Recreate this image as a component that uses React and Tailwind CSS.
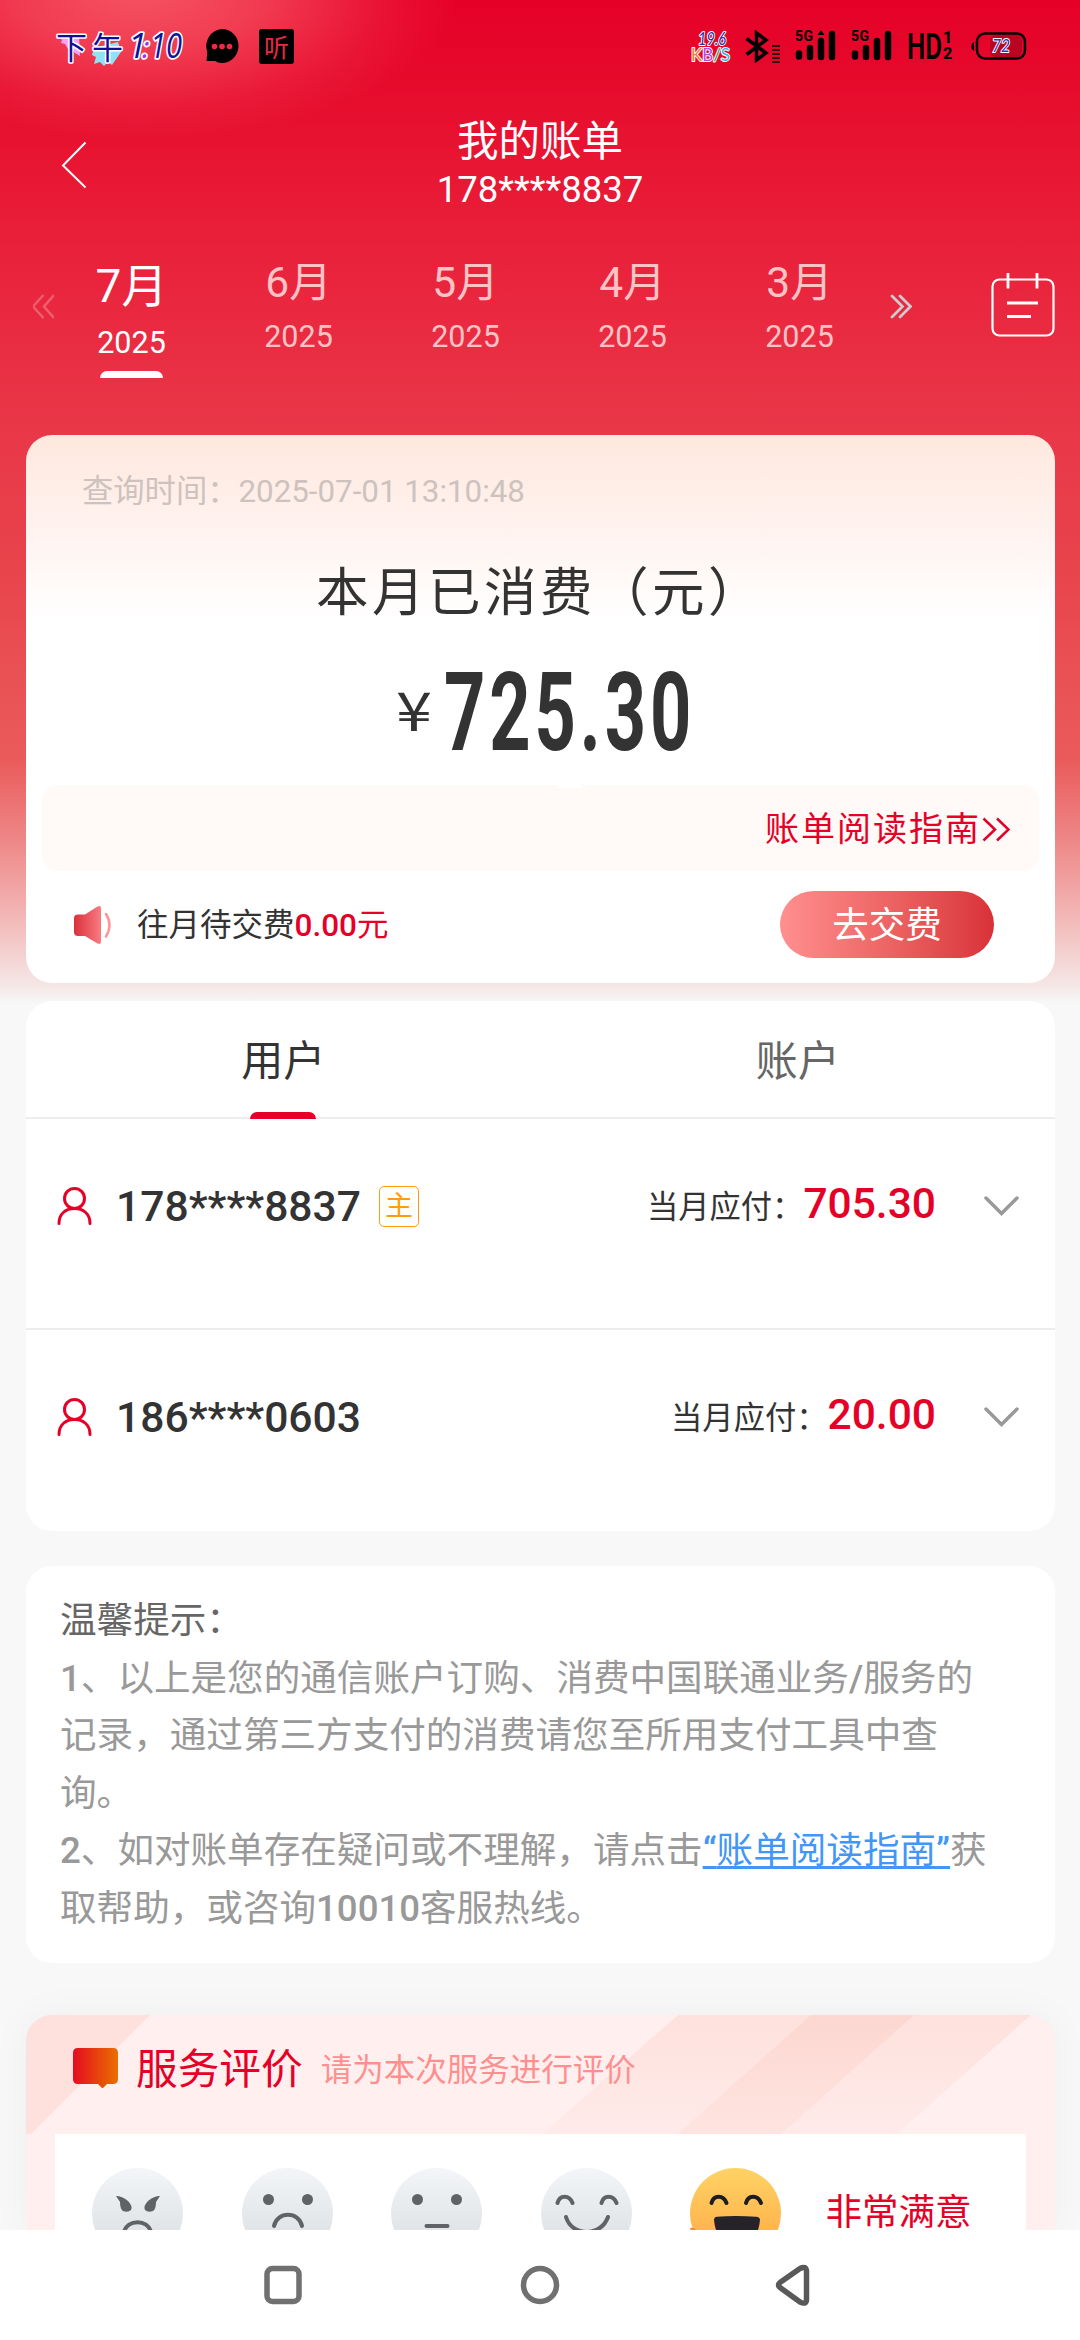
import { useState } from "react";

const months = [
  { month: "7月", year: "2025" },
  { month: "6月", year: "2025" },
  { month: "5月", year: "2025" },
  { month: "4月", year: "2025" },
  { month: "3月", year: "2025" },
];

const users = [
  { phone: "178****8837", amount: "705.30", main: true },
  { phone: "186****0603", amount: "20.00", main: false },
];

function Signal({ arrow }) {
  return (
    <svg className="overflow-visible" width="41" height="32" viewBox="0 0 41 32" fill="none">
      <text x="0" y="11" fontSize="14" fontWeight="700" fontFamily="Roboto" textLength="18" fill="#000">5G</text>
      <path d="M4 23.500v3M15 18v9M26 11v16M37 4v23" stroke="#000" strokeWidth="6.500" strokeLinecap="round" />
      {arrow && <path d="M26 0l3.500 5h-7z" fill="#000" />}
    </svg>
  );
}

function StatusBar() {
  return (
    <div className="flex h-[92px] items-center">
      <svg className="ml-[56px] overflow-visible" width="127" height="44" viewBox="0 0 127 44">
        <path d="M3 12l20-2 1 22-5-3-3-3-4-1-3-5-4-1 1-3z" fill="#f9a0f5" />
        <path d="M38 24l24-6 3 10-9 13-4-3-4 4-4-4-6 2 2-7-4-2z" fill="#8fe3f5" />
        <g fontFamily="'Noto Sans CJK SC', sans-serif" fill="#140c9c" stroke="#fff" strokeWidth="3" strokeLinejoin="round" paintOrder="stroke">
          <text x="0" y="35" fontSize="31">下</text>
          <text x="36" y="35" fontSize="31">午</text>
        </g>
        <g fontFamily="'Open Sans', sans-serif" fontStyle="italic" fill="#0d149b" stroke="#fff" strokeWidth="3.500" strokeLinejoin="round" paintOrder="stroke">
          <text x="72" y="34" fontSize="34">1</text>
          <text x="86" y="34" fontSize="30" fill="#9a30ff">:</text>
          <text x="94" y="34" fontSize="34" textLength="32" lengthAdjust="spacingAndGlyphs">10</text>
        </g>
      </svg>
      <svg className="ml-[22px]" width="34" height="36" viewBox="0 0 34 36">
        <path d="M17 1a16.500 17 0 1 1 0 34c-3 0-5-1-7-2H1.500l.8-9A16.500 17 0 0 1 17 1z" fill="#000" />
        <g fill="#ee2b45">
          <circle cx="9.500" cy="18.500" r="2.800" />
          <circle cx="17" cy="18.500" r="2.800" />
          <circle cx="24.500" cy="18.500" r="2.800" />
        </g>
      </svg>
      <div className="ml-[20px] flex size-[35px] items-center justify-center rounded-[3px] bg-black font-['Noto_Sans_CJK_SC',sans-serif] text-[25px] leading-[35px] text-[#e62a45]">听</div>

      <svg className="ml-[396px] overflow-visible" width="42" height="34" viewBox="0 0 42 34">
        <g fontFamily="Lato, sans-serif" stroke="#fff" strokeWidth="2" strokeLinejoin="round" paintOrder="stroke">
          <text x="8" y="16" fontSize="17" fontStyle="italic" fill="#2330a8" textLength="28" lengthAdjust="spacingAndGlyphs">19.6</text>
          <text x="1" y="32" fontSize="18" textLength="39" lengthAdjust="spacingAndGlyphs">
            <tspan fill="#f0803c">K</tspan>
            <tspan fill="#b04bea">B</tspan>
            <tspan fill="#1f9c4c">/</tspan>
            <tspan fill="#35b6e6">S</tspan>
          </text>
        </g>
      </svg>
      <svg className="ml-[13px]" width="35" height="33" viewBox="0 0 35 33" fill="none" stroke="#000">
        <path d="M1.500 8.500L21 23l-9.500 7V3L21 10 1.500 24.500" strokeWidth="3.500" />
        <path d="M27 16h8M27 20h8M27 24h8M27 28h8M27 32h8" strokeWidth="1.700" />
      </svg>
      <div className="ml-[15px] flex gap-[15px]">
        <Signal arrow />
        <Signal />
      </div>
      <svg className="ml-[15px] overflow-visible" width="46" height="32" viewBox="0 0 46 32" fontFamily="Roboto, sans-serif" fontWeight="700">
        <text x="0" y="29" fontSize="37" fontWeight="600" textLength="35" lengthAdjust="spacingAndGlyphs">HD</text>
        <text x="36" y="13" fontSize="16" fontWeight="800">1</text>
        <text x="36" y="29" fontSize="16" fontWeight="800">2</text>
      </svg>
      <svg className="ml-[18px]" width="56" height="30" viewBox="0 0 56 30">
        <path d="M3 11v9a5 5 0 0 1 0-9z" fill="#000" />
        <rect x="19" y="4" width="32" height="22" rx="6" fill="#b90522" />
        <rect x="6" y="2.500" width="48" height="25" rx="8" fill="none" stroke="#000" strokeWidth="2.500" />
        <text x="21" y="21" fontSize="18" fontFamily="Lato, sans-serif" fontStyle="italic" fill="#2c37b4" stroke="#fff" strokeWidth="2" paintOrder="stroke" textLength="18" lengthAdjust="spacingAndGlyphs">72</text>
      </svg>
    </div>
  );
}

function Header() {
  return (
    <div className="grid h-[143px] grid-cols-[200px_1fr_200px] pt-[26px] text-center text-white">
      <svg className="mt-[23px] ml-[61px]" width="26" height="48" viewBox="0 0 26 48" fill="none" stroke="#fff" strokeWidth="2">
        <path d="M24.500 1.500L2 24.500l22.500 22" />
      </svg>
      <div>
        <div className="h-[48px] text-[41.500px] leading-[48px]">我的账单</div>
        <div className="h-[48px] text-[36.500px] leading-[48px]">178****8837</div>
      </div>
    </div>
  );
}

function MonthBar({ selected, onSelect }) {
  return (
    <div className="flex h-[200px] items-start text-white">
      <div className="w-[48px] shrink-0 pt-[59px] pl-[33px]">
        <svg className="max-w-none" width="21" height="25" viewBox="0 0 21 25" fill="none" stroke="#fff" strokeWidth="2.500" opacity="0.25">
          <path d="M10.500 1L0 12.500 10.500 24M21 1L11 12.500 21 24" />
        </svg>
      </div>
      {months.map((item, i) => (
        <button
          key={item.month}
          onClick={() => onSelect(i)}
          className={"flex w-[167px] shrink-0 flex-col items-center " + (i === selected ? "" : "text-[#ffc3c6]")}
        >
          <span className={i === selected ? "mt-[23px] h-[56px] text-[46px] leading-[56px]" : "mt-[21px] h-[54px] text-[42.500px] leading-[54px]"}>{item.month}</span>
          <span className={i === selected ? "mt-[9px] h-[40px] text-[30.500px] leading-[40px]" : "mt-[7px] h-[40px] text-[30.500px] leading-[40px]"}>{item.year}</span>
          {i === selected && <span className="mt-[8px] h-[7px] w-[63px] rounded-t-[7px] bg-white" />}
        </button>
      ))}
      <svg className="mt-[59px] ml-[7px]" width="22" height="25" viewBox="0 0 22 25" fill="none" stroke="#ccc" strokeWidth="2.800" strokeLinecap="round">
        <path d="M2 2l10.500 10.500L2 23M10 2l10.500 10.500L10 23" />
      </svg>
      <svg className="mt-[38px] ml-[79px]" width="65" height="66" viewBox="0 0 65 66" fill="none" stroke="#fff" strokeWidth="2.200">
        <rect x="1.500" y="6.500" width="61" height="56" rx="7" />
        <path d="M17 0v15.500M46 0v15.500M16 30h31M16 43.500h24" strokeWidth="2.800" />
      </svg>
    </div>
  );
}

function BillCard() {
  return (
    <div className="mr-[25px] ml-[26px] flex h-[548px] flex-col rounded-[26px] bg-white bg-[linear-gradient(#fee8de_0px,#fff2ee_90px,#ffffff_185px)]">
      <div className="mt-[35px] ml-[56px] h-[44px] text-[31.300px] leading-[44px] text-[#cdc2bd]">查询时间：2025-07-01 13:10:48</div>
      <div className="mt-[46px] ml-[290px] h-[66px] text-[52.500px] leading-[66px] tracking-[3.500px] text-[#333]">本月已消费（元）</div>
      <div className="mt-[42px] flex h-[90px] text-[#333]">
        <span className="ml-[370px] w-[48px] origin-left scale-x-[1.200] pt-[10px] font-['Noto_Sans_CJK_SC',sans-serif] text-[54px] leading-[60px]">¥</span>
        <span className="h-[90px] origin-left scale-x-[0.655] text-[110px] leading-[90px] font-bold tracking-[6px]">725.30</span>
      </div>
      <div className="relative mr-[16px] mt-[27px] ml-[16px] flex h-[86px] shrink-0 items-center justify-end rounded-[16px] bg-[#fffaf7] pt-[2px] pr-[29px] text-[34px] leading-[84px] tracking-[2px] text-[#e60027]">
        <span className="absolute top-0 left-[515px] h-[3px] w-[26px] rounded-t-[3px] bg-white" />
        <span>账单阅读指南</span>
        <svg className="ml-[1px]" width="28" height="25" viewBox="0 0 28 25" fill="none" stroke="#e60027" strokeWidth="2.500">
          <path d="M1.500 1.500L13 12.500l-11.500 11M15 1.500l11.500 11-11.500 11" />
        </svg>
      </div>
      <div className="flex h-[107px] items-center pr-[61px] pl-[48px]">
        <svg width="37" height="40" viewBox="0 0 37 40">
          <defs>
            <linearGradient id="horn">
              <stop offset="0" stopColor="#d9313b" />
              <stop offset="1" stopColor="#f97b81" />
            </linearGradient>
          </defs>
          <path d="M4 9.500h7L23.500 1.500q3.500-1.500 3.500 2v33q0 3.500-3.500 2L11 31H4q-4 0-4-4V13q0-3.500 4-3.500z" fill="url(#horn)" />
          <path d="M32 9q7 11 0 22.500" fill="none" stroke="#ff9398" strokeWidth="2.500" strokeLinecap="round" />
        </svg>
        <div className="ml-[26px] pt-[3px] text-[31.500px] leading-[44px] text-[#333]">
          往月待交费<span className="text-[#e60027]"><span className="font-medium">0.00</span>元</span>
        </div>
        <button className="ml-auto h-[67px] w-[214px] rounded-[34px] bg-linear-to-r from-[#ff8f8f] to-[#d83138] pt-[2px] text-[36.500px] leading-[65px] text-white">去交费</button>
      </div>
    </div>
  );
}

function UserRow({ user }) {
  return (
    <div className="flex h-[118px] items-center pr-[36px] pl-[31px]">
      <svg width="35" height="38" viewBox="0 0 35 38" fill="none" stroke="#e60027" strokeWidth="3" strokeLinecap="round">
        <circle cx="17.500" cy="11.500" r="10" />
        <path d="M2 36.500c0-10 7-15 15.500-15S33 26.500 33 36.500" />
      </svg>
      <div className="ml-[24px] text-[42.600px] leading-[50px] font-medium text-[#333]">{user.phone}</div>
      {user.main && (
        <div className="ml-[18px] h-[41px] w-[40px] rounded-[5px] border border-[#ff9c10] text-center text-[28px] leading-[40px] text-[#ff9c10]">主</div>
      )}
      <div className="ml-auto pt-[3px] text-[31.300px] leading-[50px] text-[#333]">当月应付：</div>
      <div className="-mt-[4px] text-[42.500px] leading-[50px] font-medium text-[#e60027]">{user.amount}</div>
      <svg className="ml-[48px]" width="35" height="20" viewBox="0 0 35 20" fill="none" stroke="#999" strokeWidth="3.500" strokeLinecap="round">
        <path d="M2 2l15.500 15.500L33 2" />
      </svg>
    </div>
  );
}

function UserCard() {
  return (
    <div className="mt-[18px] mr-[25px] ml-[26px] h-[530px] rounded-[26px] bg-white">
      <div className="grid h-[118px] grid-cols-2 border-b-2 border-[#ededed] text-center text-[42px] leading-[121px]">
        <div className="flex h-[118px] flex-col items-center text-[#333]">
          <span className="h-[111px]">用户</span>
          <span className="h-[7px] w-[66px] shrink-0 rounded-t-[7px] bg-[#e60027]" />
        </div>
        <div className="text-[#666]">账户</div>
      </div>
      <div className="h-[211px] border-b-2 border-[#ededed] pt-[28px]">
        <UserRow user={users[0]} />
      </div>
      <div className="pt-[28px]">
        <UserRow user={users[1]} />
      </div>
    </div>
  );
}

function Tips() {
  return (
    <div className="mt-[35px] mr-[25px] ml-[26px] h-[397px] rounded-[26px] bg-white pt-[26px] pl-[34px] text-[36.600px] leading-[57.500px] whitespace-nowrap text-[#999]">
      <p className="text-[#666]">温馨提示：</p>
      <p>
        <span className="font-medium">1</span>、以上是您的通信账户订购、消费中国联通业务<span className="font-medium">/</span>服务的<br />
        记录，通过第三方支付的消费请您至所用支付工具中查<br />
        询。
      </p>
      <p>
        <span className="font-medium">2</span>、如对账单存在疑问或不理解，请点击<a className="text-[#4296f7] underline decoration-[3px] underline-offset-[3px]"><span className="font-medium">“</span>账单阅读指南<span className="font-medium">”</span></a>获<br />
        取帮助，或咨询<span className="font-medium">10010</span>客服热线。
      </p>
    </div>
  );
}

function Face({ children, happy }) {
  return (
    <svg className="mr-[58.500px] shrink-0" width="91" height="91" viewBox="0 0 91 91" fill="none" stroke="#606266" strokeWidth="4" strokeLinecap="round">
      <defs>
        <linearGradient id="gray" x2="0" y2="1">
          <stop offset="0" stopColor="#f3f5f8" />
          <stop offset="1" stopColor="#d9dde0" />
        </linearGradient>
        <linearGradient id="gold" x2="0" y2="1">
          <stop offset="0" stopColor="#ffd265" />
          <stop offset="1" stopColor="#ffa842" />
        </linearGradient>
      </defs>
      <circle cx="45.500" cy="45.500" r="45.500" fill={happy ? "url(#gold)" : "url(#gray)"} stroke="none" />
      {children}
    </svg>
  );
}

function Rating() {
  return (
    <div className="mt-[52px] mr-[25px] ml-[26px] h-[215px] shrink-0 rounded-t-[26px] bg-[#ffefef] shadow-[0_0_40px_rgba(0,0,0,0.045)]">
      <div className="relative h-[119px] overflow-hidden rounded-t-[26px]">
        <svg className="absolute top-0 left-0" width="1029" height="124" viewBox="0 0 1029 124">
          <defs>
            <linearGradient id="stripe" x2="0" y2="1">
              <stop offset="0" stopColor="#fbb9a8" stopOpacity="0.26" />
              <stop offset="1" stopColor="#fbb9a8" stopOpacity="0.08" />
            </linearGradient>
            <linearGradient id="band" x2="0" y2="1">
              <stop offset="0" stopColor="#fdd7d1" />
              <stop offset="1" stopColor="#fee4e0" />
            </linearGradient>
          </defs>
          <path d="M0 0h124L0 124z" fill="#fee0dc" />
          <path d="M652 0h353L871 119H516z" fill="url(#stripe)" />
          <path d="M785 0h103L755 119H652z" fill="url(#band)" />
        </svg>
        <div className="relative flex h-[110px] items-center pb-[4px] pl-[47px]">
          <svg width="45" height="40" viewBox="0 0 45 40">
            <defs>
              <linearGradient id="bubble">
                <stop offset="0" stopColor="#e60c20" />
                <stop offset="1" stopColor="#e87000" />
              </linearGradient>
            </defs>
            <path d="M5 0h35q5 0 5 5v26q0 5-5 5h-6l-4.500 4.500L25 36H5q-5 0-5-5V5q0-5 5-5z" fill="url(#bubble)" />
          </svg>
          <span className="ml-[18px] pt-[3px] text-[41.700px] leading-[60px] text-[#e60027]">服务评价</span>
          <span className="ml-[18px] pt-[5px] text-[31.500px] leading-[60px] text-[#ff8f8f]">请为本次服务进行评价</span>
        </div>
      </div>
      <div className="mx-[29px] flex h-[96px] items-start overflow-hidden bg-white pt-[34px] pl-[37px]">
        <Face>
          <path d="M24 28q6 0 12 5 5 5 3 9-3 3-8 1-3-2-3-9z" fill="#606266" stroke="none" />
          <path d="M68 28q-6 0-12 5-5 5-3 9 3 3 8 1 3-2 3-9z" fill="#606266" stroke="none" />
          <path d="M32 64c3-13 24-13 27 0" />
        </Face>
        <Face>
          <circle cx="26.500" cy="31.500" r="5.500" fill="#606266" stroke="none" />
          <circle cx="65.500" cy="31.500" r="5.500" fill="#606266" stroke="none" />
          <path d="M32 58c3-15 25-15 28 0" />
        </Face>
        <Face>
          <circle cx="26.500" cy="31.500" r="5.500" fill="#606266" stroke="none" />
          <circle cx="65.500" cy="31.500" r="5.500" fill="#606266" stroke="none" />
          <path d="M35.500 58h21" />
        </Face>
        <Face>
          <path d="M16.500 35c2-8.500 12-8.500 15 0M60.500 35c2-8.500 12-8.500 15 0M25 49c6 20 35 20 42 0" />
        </Face>
        <Face happy>
          <path d="M21.500 35c2-8.500 12-8.500 15 0M56 35c2-8.500 12-8.500 15 0" stroke="#1d1d1f" />
          <path d="M24 52q0-3 3-3.200 18-1.800 39 0 4 .3 4 3.200Q68 76 47 77 26 76 24 52z" fill="#252228" stroke="none" />
          <path d="M36 66q11-5 22 0-4 9-11 9t-11-9z" fill="#e0423f" stroke="none" />
          <path d="M0 60q6-1 7 5l-3 8z" fill="#ff8a1c" stroke="none" />
        </Face>
        <span className="mt-[22px] -ml-[14px] h-[40px] text-[36.500px] leading-[45px] whitespace-nowrap text-[#e60027]">非常满意</span>
      </div>
    </div>
  );
}

function NavBar() {
  return (
    <div className="flex h-[110px] shrink-0 items-center bg-white">
      <svg className="ml-[264px]" width="38" height="40" viewBox="0 0 38 40" fill="none" stroke="#707070" strokeWidth="5.500">
        <rect x="3" y="3.500" width="32" height="33" rx="5.500" />
      </svg>
      <svg className="ml-[218px]" width="40" height="40" viewBox="0 0 40 40" fill="none" stroke="#707070" strokeWidth="5.500">
        <circle cx="20" cy="20" r="16.500" />
      </svg>
      <svg className="ml-[215px]" width="36" height="42" viewBox="0 0 36 42" fill="none" stroke="#595959" strokeWidth="5.500" strokeLinejoin="round">
        <path d="M25 4.500L5 18.500q-3 2.500 0 5L25 38q6 3 6.500-2V7q-.5-5.500-6.500-2.500z" />
      </svg>
    </div>
  );
}

function App() {
  const [selected, setSelected] = useState(0);

  return (
    <div className="flex h-[2340px] w-[1080px] flex-col overflow-hidden bg-[#f8f8f8] bg-[radial-gradient(ellipse_320px_150px_at_140px_-10px,rgba(255,135,135,0.62),rgba(255,125,128,0.46)_40%,rgba(255,110,120,0.14)_78%,transparent),linear-gradient(#e60028_0px,#e60a2b_80px,#e91d38_220px,#e93748_430px,#e8434c_560px,#ea5b5b_760px,#ee8787_840px,#f2b3b2_910px,#f5e6e6_985px,#f8f8f8_1004px)] font-[Roboto,'Noto_Sans_CJK_SC',sans-serif]">
      <div className="flex flex-1 flex-col overflow-hidden">
        <StatusBar />
        <Header />
        <MonthBar selected={selected} onSelect={setSelected} />
        <BillCard />
        <UserCard />
        <Tips />
        <Rating />
      </div>
      <NavBar />
    </div>
  );
}

export default App;
